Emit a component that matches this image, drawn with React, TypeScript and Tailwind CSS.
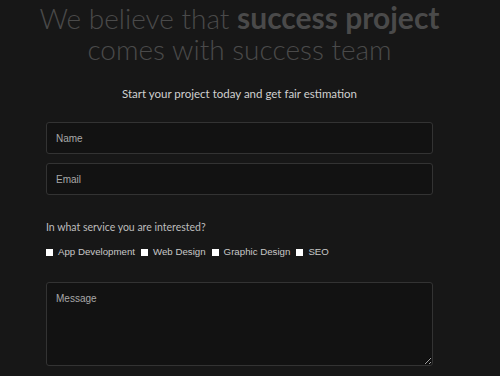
export default function App() {
  const services = ['App Development', 'Web Design', 'Graphic Design', 'SEO']
  return (
    <div className="h-[376px] w-[500px] overflow-hidden bg-[#171717]">
      <div className="ml-[46px] w-[387px]">
        <h1
          className="-mx-[40px] whitespace-nowrap pt-[2px] text-center text-[28px] font-light leading-[31px] text-[#4a4a4a]"
          style={{ fontFamily: 'Lato, sans-serif' }}
        >
          We believe that <span className="text-[30px] font-bold">success project</span>
          <br />
          comes with success team
        </h1>
        <p
          className="mt-[20px] text-center text-[11.5px] text-[#d0d0d0]"
          style={{ fontFamily: 'Lato, sans-serif' }}
        >
          Start your project today and get fair estimation
        </p>
        <form className="mt-[20px] flex flex-col" style={{ fontFamily: '"Liberation Sans", Arial, sans-serif' }}>
          <input
            placeholder="Name"
            className="h-[32px] rounded-[3px] border border-[#333] bg-[#121212] px-[9px] text-[10px] text-[#aaa] outline-none placeholder:text-[#a8a8a8]"
          />
          <input
            placeholder="Email"
            className="mt-[9px] h-[32px] rounded-[3px] border border-[#333] bg-[#121212] px-[9px] text-[10px] text-[#aaa] outline-none placeholder:text-[#a8a8a8]"
          />
          <p
            className="mt-[25px] text-[10.5px] text-[#bdbdbd]"
            style={{ fontFamily: 'Lato, sans-serif' }}
          >
            In what service you are interested?
          </p>
          <div className="mt-[9px] flex items-center gap-[6px] text-[9.7px] text-[#c8c8c8]">
            {services.map((s) => (
              <label key={s} className="flex items-center gap-[5px]">
                <span className="inline-block h-[7px] w-[7px] bg-white" />
                {s}
              </label>
            ))}
          </div>
          <textarea
            placeholder="Message"
            className="mt-[22px] h-[84px] resize-y rounded-[3px] border border-[#333] bg-[#121212] px-[9px] py-[8px] text-[10px] text-[#aaa] outline-none placeholder:text-[#a8a8a8]"
          />
        </form>
      </div>
    </div>
  )
}
